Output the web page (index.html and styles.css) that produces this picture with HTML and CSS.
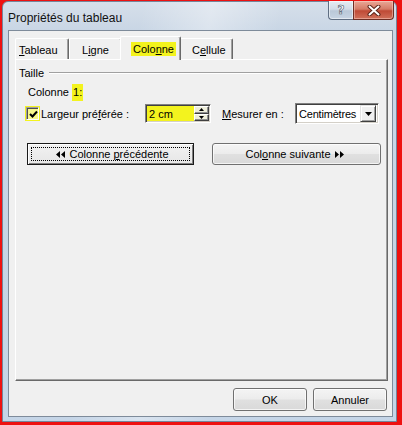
FILE: index.html
```html
<!DOCTYPE html>
<html lang="fr">
<head>
<meta charset="utf-8">
<title>Propriétés du tableau</title>
<link rel="stylesheet" href="styles.css">
</head>
<body>
<div class="window">
  <div class="titlebar">
    <span class="title">Propriétés du tableau</span>
    <div class="caption">
      <div class="cap help"><span class="qmark">?</span></div>
      <div class="cap close">
        <svg width="14" height="11" viewBox="0 0 14 11"><path d="M2.5 1.5 L11.5 9.5 M11.5 1.5 L2.5 9.5" stroke="#5a2418" stroke-width="4" stroke-linecap="round"/><path d="M2.5 1.5 L11.5 9.5 M11.5 1.5 L2.5 9.5" stroke="#ffffff" stroke-width="2" stroke-linecap="round"/></svg>
      </div>
    </div>
  </div>
  <div class="client">
    <div class="tabs">
      <div class="tab t1"><u>T</u>ableau</div>
      <div class="tab t2">L<u>i</u>gne</div>
      <div class="tab t3 selected"><span class="hl hl-tab">Colo<u>n</u>ne</span></div>
      <div class="tab t4">C<u>e</u>llule</div>
    </div>
    <div class="panel">
      <div class="group-head"><span>Taille</span><span class="rule"></span></div>
      <div class="col-label">Colonne <span class="hl hl-num">1:</span></div>
      <div class="field-row">
        <span class="chk-wrap"><span class="chk"><svg width="9" height="9" viewBox="0 0 9 9"><path d="M1 4 L3.5 6.5 L8 1.5" fill="none" stroke="#000" stroke-width="2"/></svg></span></span>
        <span class="lbl lbl-width">Largeur pré<u>f</u>érée :</span>
        <span class="spin">
          <span class="spin-value">2 cm</span>
          <span class="spin-btns">
            <span class="spin-btn"><svg width="5" height="3" viewBox="0 0 5 3"><path d="M0 3 L2.5 0 L5 3Z" fill="#000"/></svg></span>
            <span class="spin-btn"><svg width="5" height="3" viewBox="0 0 5 3"><path d="M0 0 L2.5 3 L5 0Z" fill="#000"/></svg></span>
          </span>
        </span>
        <span class="lbl lbl-unit"><u>M</u>esurer en :</span>
        <span class="combo">
          <span class="combo-value">Centimètres</span>
          <span class="combo-btn"><svg width="7" height="4" viewBox="0 0 7 4"><path d="M0 0 L7 0 L3.5 4Z" fill="#000"/></svg></span>
        </span>
      </div>
      <div class="btn-row">
        <button class="btn btn-default btn-prev"><span class="focus"><svg class="arrows" width="9" height="7" viewBox="0 0 9 7"><path d="M4 0 L0 3.5 L4 7Z M9 0 L5 3.5 L9 7Z" fill="#000"/></svg><span class="btn-text">Colonne <u>p</u>récédente</span></span></button>
        <button class="btn btn-next"><span class="btn-text">Col<u>o</u>nne suivante</span><svg class="arrows" width="9" height="7" viewBox="0 0 9 7"><path d="M0 0 L4 3.5 L0 7Z M5 0 L9 3.5 L5 7Z" fill="#000"/></svg></button>
      </div>
    </div>
    <div class="footer">
      <button class="btn btn-footer">OK</button>
      <button class="btn btn-footer">Annuler</button>
    </div>
  </div>
</div>
</body>
</html>
```

FILE: styles.css
```css
html, body {
  margin: 0;
  padding: 0;
}

body {
  width: 402px;
  height: 425px;
  overflow: hidden;
  background: #ee1111;
  font-family: "Liberation Sans", Arial, sans-serif;
  font-size: 11px;
  color: #000;
}

u {
  text-decoration: underline;
  text-underline-offset: 1px;
}

.window {
  box-sizing: border-box;
  margin: 1px 0 0 2px;
  width: 395px;
  height: 421px;
  border: 1px solid #76859a;
  border-radius: 6px 6px 0 0;
  padding: 0 3px 4px 5px;
  display: flex;
  flex-direction: column;
  background:
    linear-gradient(100deg, rgba(255,255,255,0) 30%, rgba(255,255,255,0.35) 45%, rgba(255,255,255,0) 60%),
    linear-gradient(#d6dfea 0, #c9d6e5 28px, #c5d5e7 100%);
}

.titlebar {
  height: 28px;
  display: flex;
  align-items: flex-start;
}

.title {
  margin-top: 9px;
  font-size: 12px;
  line-height: 14px;
  color: #111;
}

.caption {
  margin-left: auto;
  margin-top: -1px;
  margin-right: -1px;
  display: flex;
}

.cap {
  box-sizing: border-box;
  height: 19px;
  display: flex;
  align-items: center;
  justify-content: center;
  border: 1px solid #5f6e82;
  border-top: none;
}

.help {
  width: 25px;
  border-radius: 0 0 0 4px;
  border-right: none;
  background: linear-gradient(#e6ecf3 0%, #d3dce7 45%, #bac8d8 55%, #c7d4e3 100%);
  box-shadow: inset 0 0 0 1px rgba(255,255,255,0.5);
}

.qmark {
  font-family: "DejaVu Sans", sans-serif;
  font-weight: bold;
  font-size: 12px;
  color: #fff;
  -webkit-text-stroke: 0.6px #4b5866;
  line-height: 12px;
}

.close {
  width: 41px;
  border-radius: 0 0 4px 0;
  border-color: #6d2e24;
  background: linear-gradient(#e9a897 0%, #d57b67 45%, #bf4a35 55%, #d0705a 100%);
  box-shadow: inset 0 0 0 1px rgba(255,220,210,0.45);
}

.close svg {
  display: block;
}

.client {
  box-sizing: border-box;
  height: 387px;
  border: 1px solid #7e8b9a;
  background: #f0f0f0;
  padding: 5px 4px 5px 6px;
  display: flex;
  flex-direction: column;
}

.tabs {
  position: relative;
  z-index: 2;
  height: 23px;
  display: flex;
  align-items: flex-start;
}

.tab {
  box-sizing: border-box;
  margin-top: 2px;
  height: 21px;
  line-height: 14px;
  padding-top: 4px;
  background: #f0f0f0;
  border-top: 1px solid #ffffff;
  border-left: 1px solid #ffffff;
  border-right: 1px solid #696969;
  box-shadow: inset -1px 0 #a0a0a0;
  border-radius: 2px 2px 0 0;
  white-space: nowrap;
}

.t1 { width: 54px; padding-left: 3px; }
.t2 { width: 53px; padding-left: 12px; }
.t3 { width: 61px; padding-left: 10px; }
.t4 { width: 54px; padding-left: 12px; }

.tab.selected {
  position: relative;
  z-index: 3;
  margin: 0 -2px 0 -2px;
  height: 24px;
  padding-top: 5px;
}

.hl {
  background: #f3f31e;
}

.hl-tab {
  display: inline-block;
  padding: 0 2px;
  line-height: 14px;
}

.panel {
  position: relative;
  z-index: 1;
  box-sizing: border-box;
  height: 322px;
  border-top: 1px solid #ffffff;
  border-left: 1px solid #ffffff;
  border-right: 1px solid #696969;
  border-bottom: 1px solid #696969;
  box-shadow: inset -1px -1px #a0a0a0;
  padding: 6px 0 0 3px;
}

.group-head {
  display: flex;
  align-items: center;
  height: 14px;
  line-height: 14px;
}

.rule {
  flex: 1;
  margin: 0 6px 0 5px;
  border-top: 1px solid #a0a0a0;
  border-bottom: 1px solid #ffffff;
}

.col-label {
  margin-top: 5px;
  padding-left: 9px;
  line-height: 14px;
}

.hl-num {
  padding: 2px 1px 3px 1px;
}

.field-row {
  margin-top: 4px;
  height: 21px;
  display: flex;
  align-items: center;
}

.chk-wrap {
  margin-left: 6px;
  width: 15px;
  height: 15px;
  background: #f3f31e;
  display: flex;
  align-items: center;
  justify-content: center;
}

.chk {
  box-sizing: border-box;
  width: 13px;
  height: 13px;
  border-top: 1px solid #a0a0a0;
  border-left: 1px solid #a0a0a0;
  border-right: 1px solid #ffffff;
  border-bottom: 1px solid #ffffff;
  box-shadow: inset 1px 1px #505050;
  background: #f8f88a;
  display: flex;
  align-items: center;
  justify-content: center;
}

.chk svg {
  display: block;
  margin: 1px 0 0 1px;
}

.lbl {
  line-height: 14px;
  white-space: nowrap;
}

.lbl-width {
  margin-left: 1px;
  width: 104px;
}

.spin {
  box-sizing: border-box;
  width: 66px;
  height: 19px;
  border-top: 1px solid #808080;
  border-left: 1px solid #808080;
  border-right: 1px solid #ffffff;
  border-bottom: 1px solid #ffffff;
  box-shadow: inset 1px 1px #404040, inset -1px -1px #d4d0c8;
  background: #f3f31e;
  display: flex;
  align-items: center;
  padding: 1px 1px 1px 3px;
}

.spin-value {
  flex: 1;
  line-height: 14px;
}

.spin-btns {
  width: 15px;
  height: 15px;
  display: flex;
  flex-direction: column;
}

.spin-btn {
  box-sizing: border-box;
  flex: 1;
  background: #eeeeda;
  border-top: 1px solid #ffffff;
  border-left: 1px solid #ffffff;
  border-right: 1px solid #404040;
  border-bottom: 1px solid #404040;
  box-shadow: inset -1px -1px #909090;
  display: flex;
  align-items: center;
  justify-content: center;
}

.spin-btn svg {
  display: block;
}

.lbl-unit {
  margin-left: 11px;
  width: 73px;
}

.combo {
  box-sizing: border-box;
  width: 84px;
  height: 21px;
  border-top: 1px solid #808080;
  border-left: 1px solid #808080;
  border-right: 1px solid #ffffff;
  border-bottom: 1px solid #ffffff;
  box-shadow: inset 1px 1px #404040, inset -1px -1px #d4d0c8;
  background: #ffffff;
  display: flex;
  align-items: center;
  padding: 2px 2px 2px 3px;
}

.combo-value {
  flex: 1;
  line-height: 14px;
  white-space: nowrap;
  letter-spacing: -0.2px;
}

.combo-btn {
  box-sizing: border-box;
  width: 16px;
  height: 17px;
  background: #f0f0f0;
  border-top: 1px solid #e3e3e3;
  border-left: 1px solid #e3e3e3;
  border-right: 1px solid #404040;
  border-bottom: 1px solid #404040;
  box-shadow: inset 1px 1px #ffffff, inset -1px -1px #a0a0a0;
  display: flex;
  align-items: center;
  justify-content: center;
}

.combo-btn svg {
  display: block;
}

.btn-row {
  margin-top: 19px;
  padding-left: 8px;
  display: flex;
  gap: 18px;
}

.btn {
  box-sizing: border-box;
  font-family: inherit;
  font-size: 11px;
  color: #000;
  padding: 0;
  margin: 0;
  border: 1px solid #707070;
  border-radius: 3px;
  background: linear-gradient(#f4f4f4 0%, #ececec 48%, #e0e0e0 52%, #d9d9d9 100%);
  box-shadow: inset 0 0 0 1px rgba(255,255,255,0.7);
  display: flex;
  align-items: center;
  justify-content: center;
  line-height: 14px;
  white-space: nowrap;
}

.btn-text {
  white-space: pre;
}

.btn .arrows {
  display: block;
  margin: 0 4px;
}

.btn-prev {
  width: 167px;
  height: 22px;
  border: 1px solid #1a1a1a;
  border-radius: 0;
  background: linear-gradient(#f2f2f2, #e6e6e6);
  box-shadow: inset 1px 1px #ffffff, inset -1px -1px #808080;
  padding: 3px;
}

.focus {
  box-sizing: border-box;
  width: 100%;
  height: 100%;
  border: 1px dotted #000;
  display: flex;
  align-items: center;
  justify-content: center;
}

.btn-next {
  width: 169px;
  height: 22px;
}

.footer {
  margin-top: 7px;
  margin-right: 1px;
  display: flex;
  justify-content: flex-end;
  gap: 6px;
}

.btn-footer {
  width: 74px;
  height: 23px;
}
```
